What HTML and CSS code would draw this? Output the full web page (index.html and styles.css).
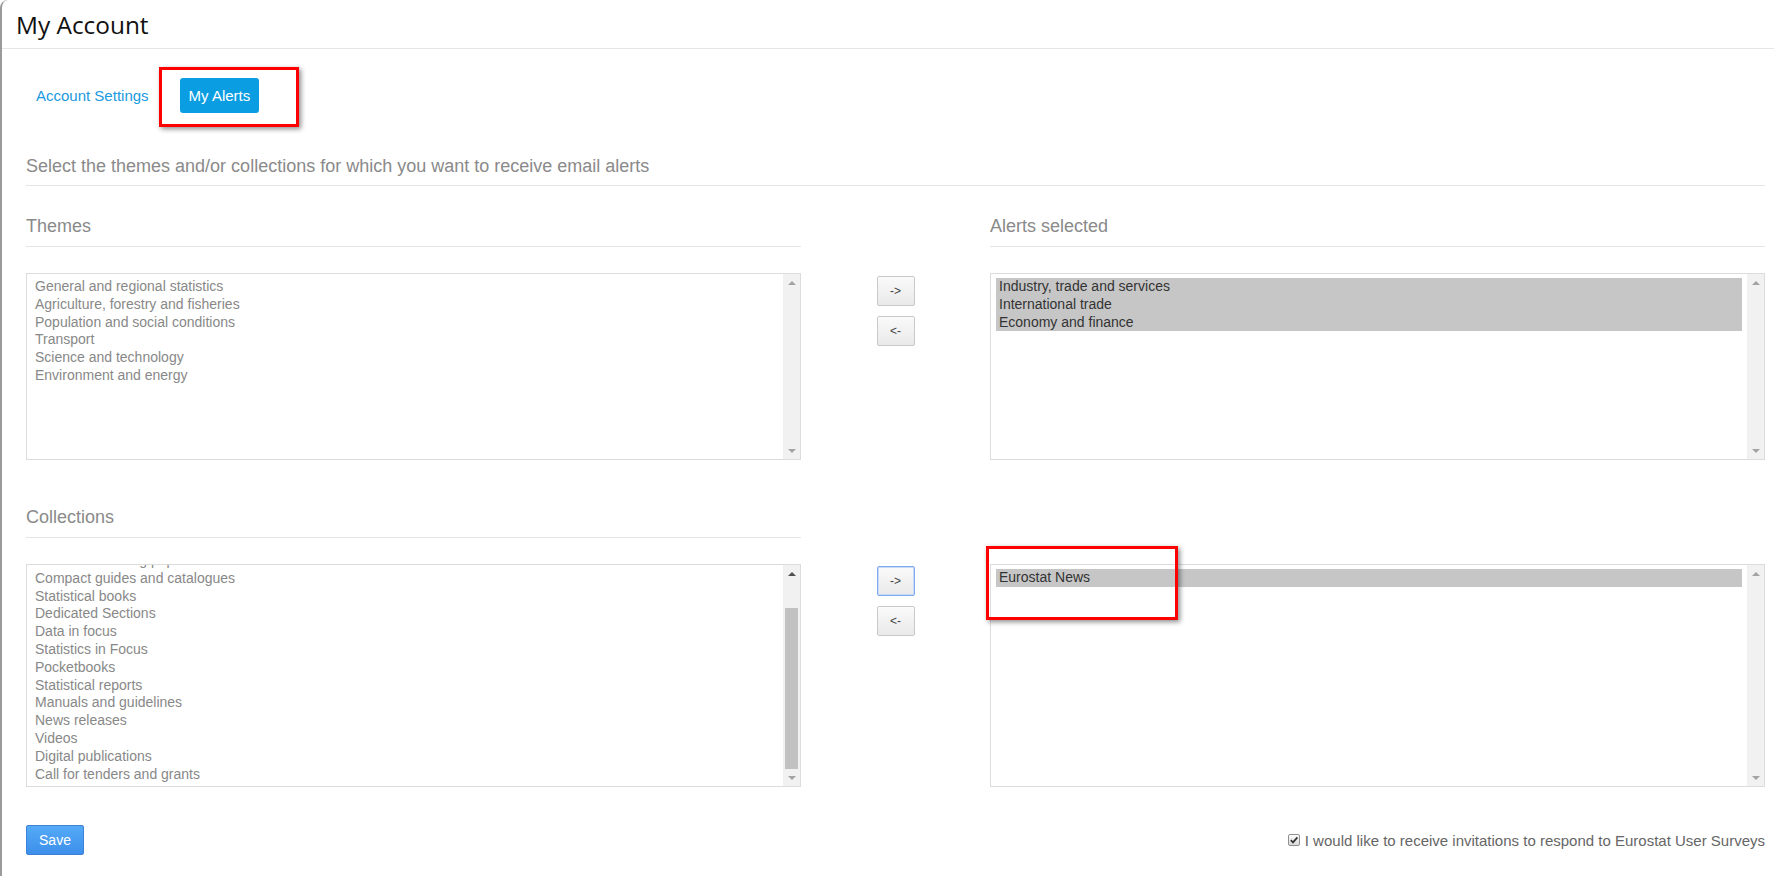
FILE: index.html
```html
<!DOCTYPE html>
<html lang="en">
<head>
  <meta charset="UTF-8">
  <meta name="viewport" content="width=device-width, initial-scale=1.0">
  <title>My Account</title>
  <link rel="stylesheet" href="styles.css">
</head>
<body>
  <div class="window">
    <header class="page-head">
      <h1>My Account</h1>
    </header>

    <div class="content">
      <nav class="tabs">
        <a class="tab" href="#">Account Settings</a>
        <a class="tab active" href="#">My Alerts</a>
      </nav>

      <h2 class="intro">Select the themes and/or collections for which you want to receive email alerts</h2>

      <section class="picker">
        <h3>Themes</h3>
        <div></div>
        <h3>Alerts selected</h3>

        <div class="listbox themes">
          <ul class="options">
            <li>General and regional statistics</li>
            <li>Agriculture, forestry and fisheries</li>
            <li>Population and social conditions</li>
            <li>Transport</li>
            <li>Science and technology</li>
            <li>Environment and energy</li>
          </ul>
          <div class="scrollbar">
            <span class="arrow up"></span>
            <span class="track"></span>
            <span class="arrow down"></span>
          </div>
        </div>
        <div class="moves">
          <button class="move">-&gt;</button>
          <button class="move">&lt;-</button>
        </div>
        <div class="listbox themes">
          <ul class="options">
            <li class="sel">Industry, trade and services</li>
            <li class="sel">International trade</li>
            <li class="sel">Economy and finance</li>
          </ul>
          <div class="scrollbar">
            <span class="arrow up"></span>
            <span class="track"></span>
            <span class="arrow down"></span>
          </div>
        </div>
      </section>

      <section class="picker second">
        <h3>Collections</h3>
        <div></div>
        <div></div>

        <div class="listbox collections">
          <ul class="options scrolled">
            <li>Statistical working papers</li>
            <li>Compact guides and catalogues</li>
            <li>Statistical books</li>
            <li>Dedicated Sections</li>
            <li>Data in focus</li>
            <li>Statistics in Focus</li>
            <li>Pocketbooks</li>
            <li>Statistical reports</li>
            <li>Manuals and guidelines</li>
            <li>News releases</li>
            <li>Videos</li>
            <li>Digital publications</li>
            <li>Call for tenders and grants</li>
          </ul>
          <div class="scrollbar">
            <span class="arrow up dark"></span>
            <span class="track"><span class="thumb"></span></span>
            <span class="arrow down"></span>
          </div>
        </div>
        <div class="moves">
          <button class="move focus">-&gt;</button>
          <button class="move">&lt;-</button>
        </div>
        <div class="listbox collections">
          <ul class="options">
            <li class="sel">Eurostat News</li>
          </ul>
          <div class="scrollbar">
            <span class="arrow up"></span>
            <span class="track"></span>
            <span class="arrow down"></span>
          </div>
        </div>
      </section>

      <div class="footer">
        <button class="save">Save</button>
        <label class="survey">
          <span class="check">
            <svg width="10" height="10" viewBox="0 0 10 10"><path d="M1.8 5.2 L4 7.4 L8.4 2.4" fill="none" stroke="#333" stroke-width="1.7"/></svg>
          </span>
          I would like to receive invitations to respond to Eurostat User Surveys
        </label>
      </div>
    </div>

    <span class="callout callout-tabs"></span>
    <span class="callout callout-news"></span>
  </div>
</body>
</html>
```

FILE: styles.css
```css
body {
  margin: 0;
  background: #fff;
  font-family: "Liberation Sans", Arial, sans-serif;
}

.window {
  position: relative;
  height: 876px;
  box-sizing: border-box;
  border-left: 2px solid #9a9a9a;
  border-top-left-radius: 8px;
  overflow: hidden;
}

.page-head {
  height: 48px;
  display: flex;
  align-items: center;
  padding-left: 14px;
  border-bottom: 1px solid #e6e6e6;
}

h1 {
  margin: 0;
  font-family: "Open Sans", sans-serif;
  font-weight: 400;
  font-size: 24.4px;
  color: #111;
}

.content {
  padding: 29px 9px 0 24px;
}

.tabs {
  display: flex;
  gap: 22px;
  padding-left: 1px;
}

.tab {
  font-size: 15px;
  line-height: 17px;
  padding: 9px;
  border-radius: 3px;
  color: #1a9ae0;
  text-decoration: none;
}

.tab.active {
  background: #0b9de2;
  color: #fff;
}

.intro {
  margin: 43px 0 0;
  padding-bottom: 9px;
  border-bottom: 1px solid #e5e5e5;
  font-size: 18px;
  font-weight: normal;
  line-height: 20px;
  color: #8a8a8a;
}

.picker {
  display: grid;
  grid-template-columns: 775px 1fr 775px;
  margin-top: 30px;
}

.picker.second {
  margin-top: 47px;
}

.picker h3 {
  margin: 0 0 26px;
  padding-bottom: 10px;
  border-bottom: 1px solid #e5e5e5;
  font-size: 18px;
  font-weight: normal;
  line-height: 20px;
  color: #8a8a8a;
}

.listbox {
  display: flex;
  box-sizing: border-box;
  border: 1px solid #dcdcdc;
}

.listbox.themes {
  height: 187px;
}

.listbox.collections {
  height: 223px;
}

.options {
  flex: 1;
  margin: 0;
  padding: 4px 5px 0 5px;
  list-style: none;
  overflow: hidden;
}

.options.scrolled {
  padding-top: 0;
}

.options.scrolled li:first-child {
  margin-top: -13px;
}

.options li {
  padding: 0 3px;
  font-size: 14px;
  line-height: 17.8px;
  color: #888;
  white-space: nowrap;
}

.options li.sel {
  background: #c6c6c6;
  color: #333;
}

.scrollbar {
  width: 17px;
  display: flex;
  flex-direction: column;
  align-items: center;
  background: #f1f1f1;
}

.arrow {
  width: 17px;
  height: 17px;
  display: flex;
  align-items: center;
  justify-content: center;
}

.arrow::before {
  content: "";
  border-left: 4px solid transparent;
  border-right: 4px solid transparent;
}

.arrow.up::before {
  border-bottom: 4px solid #a3a3a3;
}

.arrow.up.dark::before {
  border-bottom-color: #505050;
}

.arrow.down::before {
  border-top: 4px solid #a3a3a3;
}

.track {
  flex: 1;
  width: 100%;
  display: flex;
  flex-direction: column;
  justify-content: flex-end;
  align-items: center;
}

.thumb {
  width: 13px;
  height: 161px;
  background: #c1c1c1;
}

.moves {
  display: flex;
  flex-direction: column;
  align-items: center;
  gap: 10px;
  padding-top: 3px;
}

.second .moves {
  padding-top: 2px;
}

.move {
  width: 38px;
  height: 30px;
  padding: 0;
  border: 1px solid #c9c9c9;
  border-radius: 2px;
  background: linear-gradient(#fafafa, #e9e9e9);
  font-family: "Liberation Sans", Arial, sans-serif;
  font-size: 12px;
  color: #444;
}

.move.focus {
  border-color: #7fa9ec;
  box-shadow: inset 0 0 0 1px #c6dbf8;
}

.footer {
  display: flex;
  justify-content: space-between;
  align-items: center;
  margin-top: 38px;
}

.save {
  width: 58px;
  height: 30px;
  padding: 0;
  border: 1px solid #3b82d8;
  border-radius: 2px;
  background: linear-gradient(#55aaf8, #3d8fea);
  font-family: "Liberation Sans", Arial, sans-serif;
  font-size: 14px;
  color: #fff;
}

.survey {
  display: flex;
  align-items: center;
  gap: 5px;
  font-size: 15px;
  color: #666;
}

.check {
  width: 12px;
  height: 12px;
  box-sizing: border-box;
  display: flex;
  align-items: center;
  justify-content: center;
  border: 1px solid #8f8f8f;
  border-radius: 2px;
  background: linear-gradient(#fdfdfd, #dadada);
}

.callout {
  position: absolute;
  box-sizing: border-box;
  border: 3px solid #f00;
  box-shadow: 2px 2px 5px rgba(0, 0, 0, 0.45);
}

.callout-tabs {
  left: 157px;
  top: 67px;
  width: 140px;
  height: 60px;
}

.callout-news {
  left: 984px;
  top: 546px;
  width: 192px;
  height: 74px;
}
```
